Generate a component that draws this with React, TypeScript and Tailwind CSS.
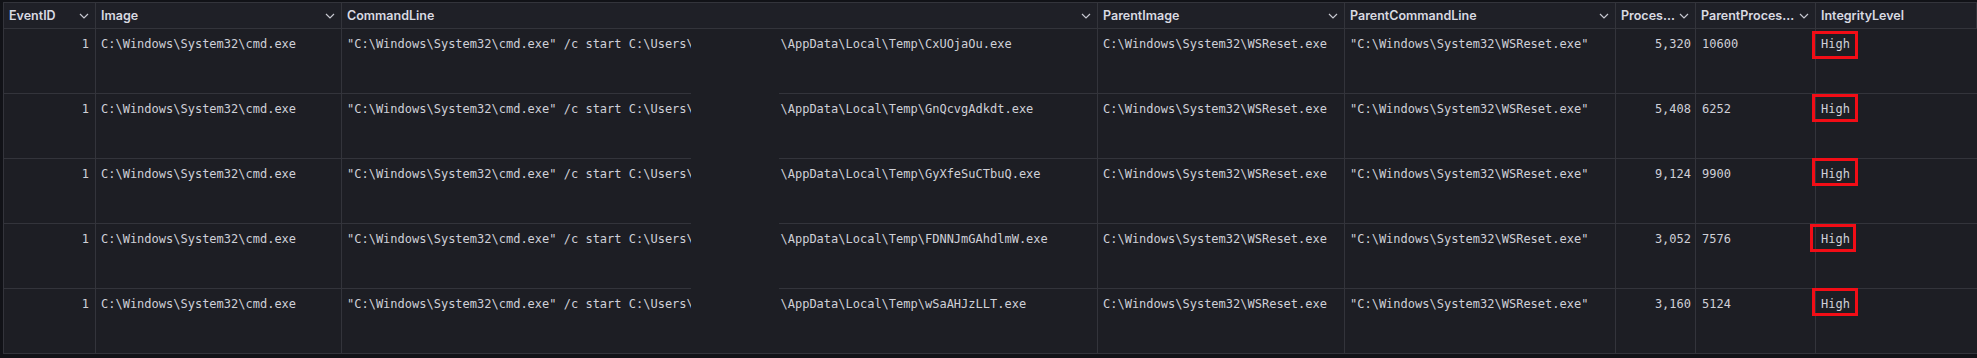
import React from 'react'

const MONO = { fontFamily: '"DejaVu Sans Mono", "Liberation Mono", monospace' }

const COLUMNS = [
  { key: 'EventID', label: 'EventID', chevron: true },
  { key: 'Image', label: 'Image', chevron: true },
  { key: 'CommandLine', label: 'CommandLine', chevron: true },
  { key: 'ParentImage', label: 'ParentImage', chevron: true },
  { key: 'ParentCommandLine', label: 'ParentCommandLine', chevron: true },
  { key: 'ProcessId', label: 'ProcessId', chevron: true },
  { key: 'ParentProcessId', label: 'ParentProcessId', chevron: true },
  { key: 'IntegrityLevel', label: 'IntegrityLevel', chevron: false },
]

// username is blanked out in the screenshot, keep the width with spaces
const BLANK = '            '

const ROWS = [
  { exe: 'CxUOjaOu.exe', pid: '5,320', ppid: '10600', box: 'left-[-4px] top-[2px]' },
  { exe: 'GnQcvgAdkdt.exe', pid: '5,408', ppid: '6252', box: 'left-[-4px] top-[0px]' },
  { exe: 'GyXfeSuCTbuQ.exe', pid: '9,124', ppid: '9900', box: 'left-[-4px] top-[-1px]' },
  { exe: 'FDNNJmGAhdlmW.exe', pid: '3,052', ppid: '7576', box: 'left-[-6px] top-[0px]' },
  { exe: 'wSaAHJzLLT.exe', pid: '3,160', ppid: '5124', box: 'left-[-4px] top-[-1px]' },
]

function Chevron() {
  return (
    <svg width="10" height="6" viewBox="0 0 10 6" className="shrink-0 text-[#c7c8d0]">
      <polyline points="1,1 5,5 9,1" fill="none" stroke="currentColor" strokeWidth="1.2" />
    </svg>
  )
}

export default function App() {
  return (
    <div className="w-[1977px] h-[358px] bg-[#111217] overflow-hidden">
      <div className="relative ml-[3px] mt-[2px] border-l border-t border-[#33343b] bg-[#1d1e24]">
        <div className="grid grid-cols-[92px_246px_756px_247px_271px_80px_120px_1fr]">
          {/* header */}
          {COLUMNS.map((c) => (
            <div
              key={c.key}
              className="h-[26px] flex items-center gap-1 pl-[5px] pr-[6px] border-r border-b border-[#33343b] bg-[#1f2027] last:border-r-0"
              style={{ fontFamily: 'Inter, "Noto Sans", sans-serif' }}
            >
              <span className="flex-1 truncate text-[12.5px] font-semibold text-[#d9dae2] leading-[16px]">
                {c.label}
              </span>
              {c.chevron && <Chevron />}
            </div>
          ))}

          {/* body */}
          {ROWS.map((r, i) => (
            <React.Fragment key={i}>
              <Cell className="text-right pr-[6px]">1</Cell>
              <Cell>C:\Windows\System32\cmd.exe</Cell>
              <Cell>
                {'"C:\\Windows\\System32\\cmd.exe" /c start C:\\Users\\' + BLANK + '\\AppData\\Local\\Temp\\' + r.exe}
              </Cell>
              <Cell>C:\Windows\System32\WSReset.exe</Cell>
              <Cell>"C:\Windows\System32\WSReset.exe"</Cell>
              <Cell className="text-right pr-[4px]">{r.pid}</Cell>
              <Cell className="pl-[6px]">{r.ppid}</Cell>
              <Cell last>
                High
                {/* red highlight drawn over the screenshot */}
                <span className={`absolute ${r.box} w-[46px] h-[28px] border-[3px] border-[#f20d16]`} />
              </Cell>
            </React.Fragment>
          ))}
        </div>

        {/* redaction patch over the username */}
        <div className="absolute left-[687px] top-[27px] w-[88px] h-[323px] bg-[#1d1e24]" />
      </div>
    </div>
  )
}

function Cell({ children, className = '', last = false }: { children: React.ReactNode; className?: string; last?: boolean }) {
  return (
    <div
      className={`relative h-[65px] pl-[5px] pt-[7px] border-b border-[#33343b] text-[12px] leading-[16px] text-[#cfd0d8] whitespace-pre ${
        last ? 'overflow-visible' : 'border-r overflow-hidden'
      } ${className}`}
      style={MONO}
    >
      {children}
    </div>
  )
}
